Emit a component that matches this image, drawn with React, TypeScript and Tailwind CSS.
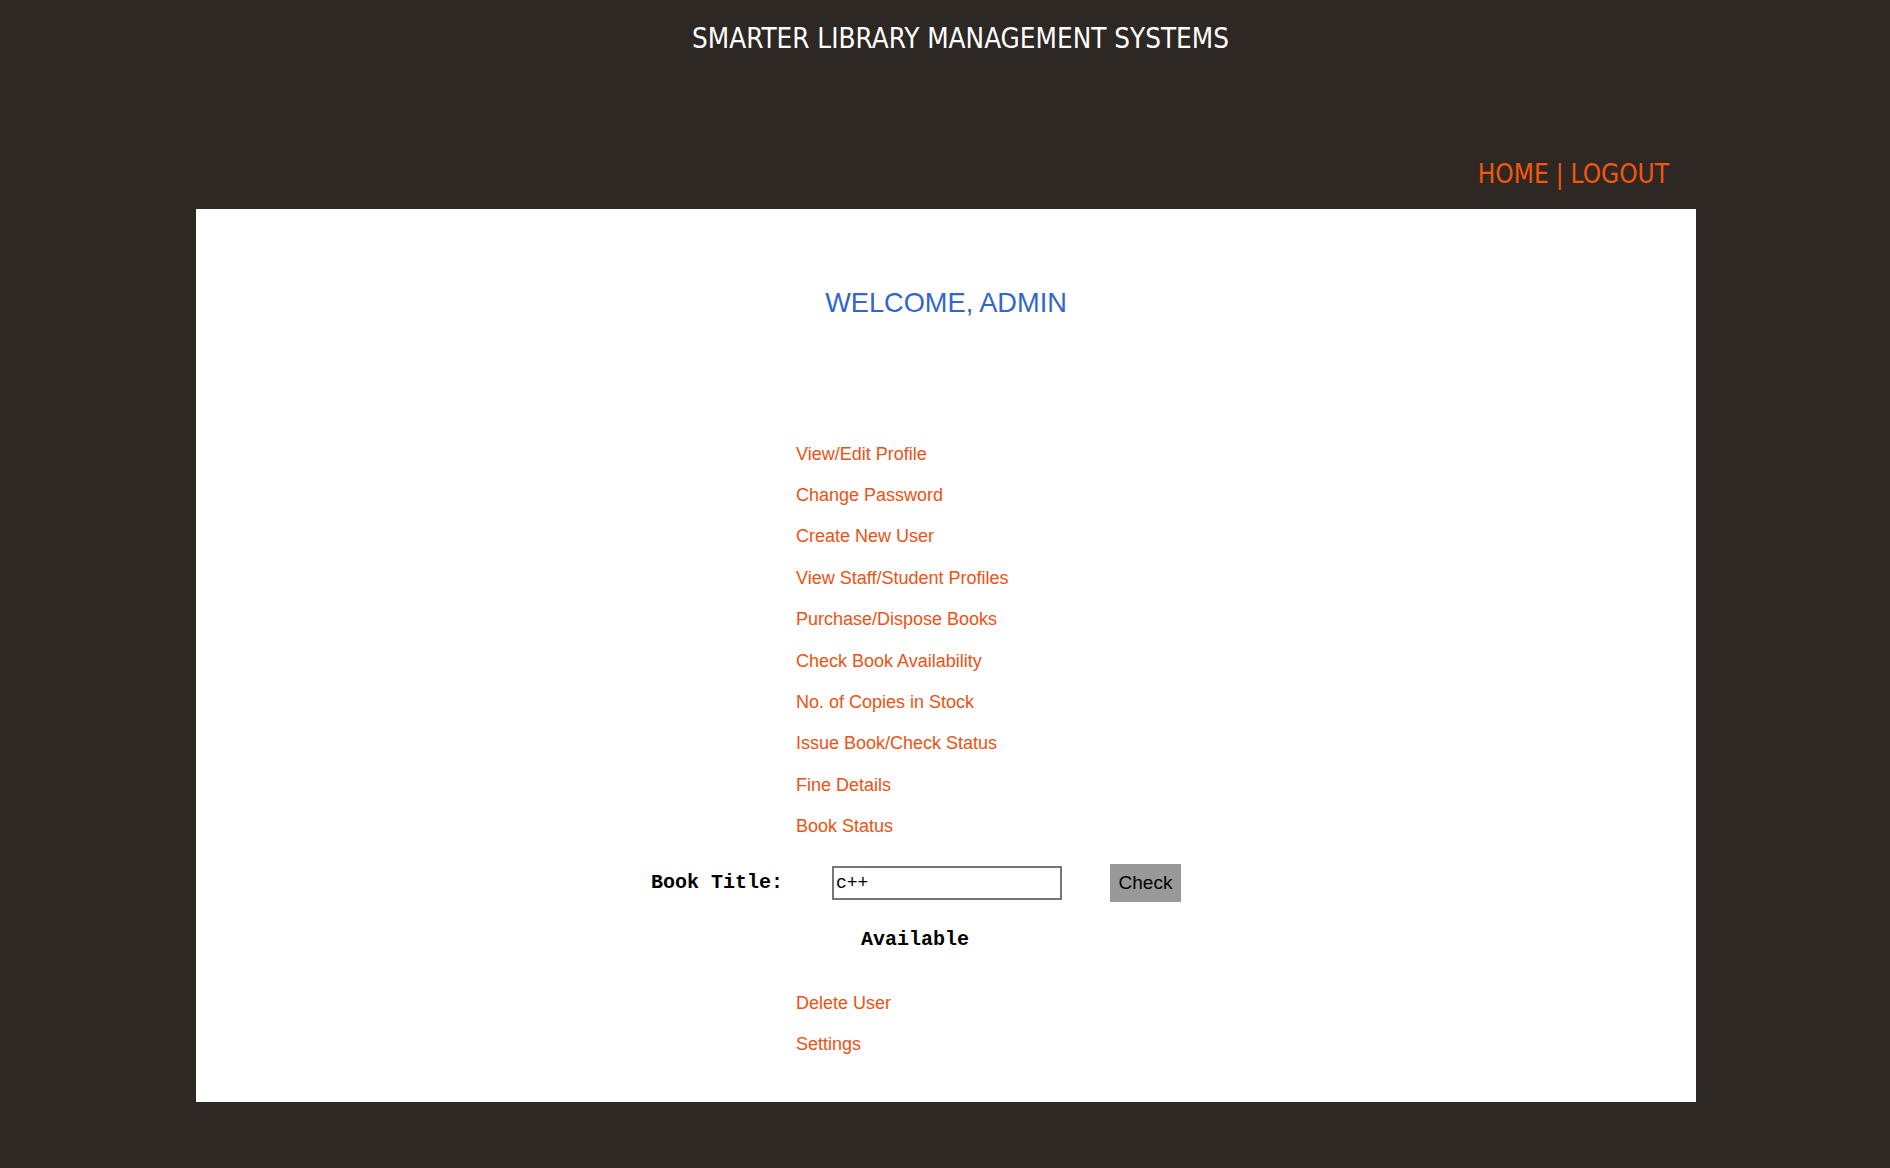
import React from "react";

const menuTop = [
	"View/Edit Profile",
	"Change Password",
	"Create New User",
	"View Staff/Student Profiles",
	"Purchase/Dispose Books",
	"Check Book Availability",
	"No. of Copies in Stock",
	"Issue Book/Check Status",
	"Fine Details",
	"Book Status",
];

const menuBottom = ["Delete User", "Settings"];

const MenuLink: React.FC<{ label: string }> = ({ label }) => (
	<div className="flex h-[41.4px] items-center pl-[600px]">
		<a href="#" className="text-[18px] leading-none text-[#ee5212]" style={{ fontFamily: "Arial, 'Liberation Sans', sans-serif" }}>
			{label}
		</a>
	</div>
);

export default function App() {
	return (
		<div className="min-h-[1168px] w-full bg-[#2d2823]">
			<header className="flex h-[209px] flex-col">
				<h1
					className="pl-[31px] pt-[25px] text-center text-[27.6px] leading-[28px] text-white"
					style={{ fontFamily: "Tahoma, 'DejaVu Sans Condensed', 'DejaVu Sans', sans-serif", fontStretch: "condensed" }}
				>
					SMARTER LIBRARY MANAGEMENT SYSTEMS
				</h1>
				<nav
					className="mt-[107px] flex justify-end pr-[221px] text-[26px] leading-[28px] text-[#f2560f]"
					style={{ fontFamily: "Tahoma, 'DejaVu Sans Condensed', 'DejaVu Sans', sans-serif", fontStretch: "condensed" }}
				>
					<a href="#">HOME</a>
					<span className="px-[7px]">|</span>
					<a href="#">LOGOUT</a>
				</nav>
			</header>

			<main className="ml-[196px] flex h-[893px] w-[1500px] flex-col bg-white">
				<h2
					className="mt-[79px] h-[30px] text-center text-[27.2px] leading-[30px] text-[#3366cc]"
					style={{ fontFamily: "Arial, 'Liberation Sans', sans-serif" }}
				>
					WELCOME, ADMIN
				</h2>

				<div className="mt-[115px] flex flex-col">
					{menuTop.map((item) => (
						<MenuLink key={item} label={item} />
					))}
				</div>

				<div className="mt-[17px] flex h-[38px] items-center pl-[455px]">
					<label
						className="w-[181px] text-[20px] font-bold text-black"
						style={{ fontFamily: "'Liberation Mono', 'Courier New', monospace" }}
					>
						Book Title:
					</label>
					<input
						defaultValue="c++"
						className="h-[34px] w-[230px] border-2 border-[#767676] px-[2px] text-[18px] text-black outline-none"
						style={{ fontFamily: "'Liberation Mono', 'Courier New', monospace" }}
					/>
					<button
						className="ml-[48px] h-[38px] w-[71px] bg-[#999999] text-[19px] text-black"
						style={{ fontFamily: "Arial, 'Liberation Sans', sans-serif" }}
					>
						Check
					</button>
				</div>

				<div
					className="mt-[26px] pl-[665px] text-[20px] font-bold leading-[24px] text-black"
					style={{ fontFamily: "'Liberation Mono', 'Courier New', monospace" }}
				>
					Available
				</div>

				<div className="mt-[30px] flex flex-col">
					{menuBottom.map((item) => (
						<MenuLink key={item} label={item} />
					))}
				</div>
			</main>
		</div>
	);
}
